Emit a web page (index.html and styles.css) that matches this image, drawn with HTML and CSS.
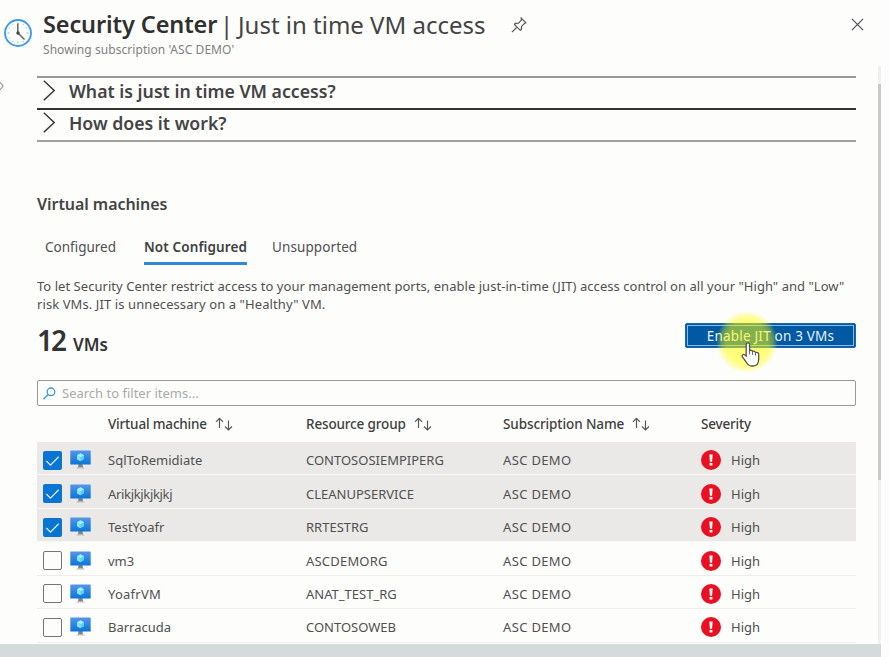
FILE: index.html
```html
<!DOCTYPE html>
<html lang="en">
<head>
<meta charset="utf-8">
<title>Security Center | Just in time VM access</title>
<link rel="stylesheet" href="styles.css">
</head>
<body>
<svg class="defs" aria-hidden="true">
  <defs>
    <linearGradient id="screen" x1="0" y1="0" x2="0" y2="1"><stop offset="0" stop-color="#5596e8"/><stop offset="1" stop-color="#0b74d6"/></linearGradient>
    <symbol id="vm" viewBox="0 0 21 20"><path d="M8.5 14h4l.6 4h-5.2z" fill="#7a848b"/><path d="M6 18.6q1-1.6 3-1.6h3q2 0 3 1.6z" fill="#b9bcbe"/><rect x=".3" y=".5" width="20.4" height="14" rx=".6" fill="url(#screen)"/><path d="M10.5 3.3 14 5.3v4l-3.5 2-3.5-2v-4z" fill="#55d2ef"/><path d="m10.5 3.3 3.5 2-3.5 2-3.5-2z" fill="#a4edf9"/><path d="m7 5.3 3.5 2v4l-3.5-2z" fill="#84e2f6"/></symbol>
    <symbol id="alert" viewBox="0 0 20 20"><circle cx="10" cy="10" r="10" fill="#e81123"/><path d="M8.4 4.5h3.2l-.5 7.2H8.9z" fill="#fff"/><rect x="8.6" y="12.9" width="2.8" height="2.6" fill="#fff"/></symbol>
    <symbol id="sort" viewBox="0 0 18 14"><path d="M4.5 11V1.3M1 4.8l3.5-3.5L8 4.8M13.5 3.5v9.5M10 9.5l3.5 3.5L17 9.5" fill="none" stroke="#555" stroke-width="1.15"/></symbol>
    <symbol id="chevron" viewBox="0 0 12 21"><path d="m.8.8 10.4 9.7L.8 20.2" fill="none" stroke="#333" stroke-width="1.4"/></symbol>
    <symbol id="tick" viewBox="0 0 19 19"><path d="m3.3 10 4.2 4.1 8.2-8.3" fill="none" stroke="#dceefa" stroke-width="1.3"/></symbol>
  </defs>
</svg>
<div class="blade">
  <header class="header">
    <svg class="clock" viewBox="0 0 28 28"><circle cx="14" cy="14" r="13" fill="#fbfcfd" stroke="#3d9be9" stroke-width="1.9"/><path d="M14 3.5v2M14 22.5v2M3.5 14h2M22.5 14h2M8.5 4.8l.6 1.1M19.5 4.8l-.6 1.1M4.8 8.5l1.1.6M23.2 8.5l-1.1.6M4.8 19.5l1.1-.6M8.5 23.2l.6-1.1M19.5 23.2l-.6-1.1" stroke="#aaa" stroke-width=".9"/><path d="M13.8 4.5V14M14 14l6.5 6.5" fill="none" stroke="#666" stroke-width="1.5"/><circle cx="14" cy="14" r="1.7" fill="#444"/></svg>
    <div class="titles">
      <h1><b class="t-name">Security Center</b><span class="t-bar">|</span><span class="t-page">Just in time VM access</span></h1>
      <p class="subtitle"><span>Showing subscription 'ASC DEMO'</span></p>
    </div>
    <svg class="pin" viewBox="0 0 16 16"><path d="m10.2 1.1 4.7 4.7-1.3.5-3.1 3.1-.2 3.2-1.1.7-5.8-5.8.8-1.1 3.3-.2 2.9-3.1zM6.1 10 .9 15.1" fill="none" stroke="#555" stroke-width="1.15"/></svg>
    <svg class="close" viewBox="0 0 14 14"><path d="m1 1 12 12M13 1 1 13" stroke="#4a4a50" stroke-width="1.2"/></svg>
  </header>
  <main class="content">
    <section class="accordion">
      <div class="fold"><svg><use href="#chevron"/></svg><span class="q1">What is just in time VM access?</span></div>
      <div class="fold"><svg><use href="#chevron"/></svg><span class="q2">How does it work?</span></div>
    </section>
    <h2><span>Virtual machines</span></h2>
    <nav class="tabs">
      <a class="tab tab-a">Configured</a><a class="tab tab-b active">Not Configured</a><a class="tab tab-c">Unsupported</a>
    </nav>
    <p class="intro"><span class="l1">To let Security Center restrict access to your management ports, enable just-in-time (JIT) access control on all your "High" and "Low"</span><br><span class="l2">risk VMs. JIT is unnecessary on a "Healthy" VM.</span></p>
    <div class="summary">
      <div class="count"><span class="num">12</span><span class="unit">VMs</span></div>
      <button class="enable"><span>Enable JIT on 3 VMs</span></button>
      <div class="halo"></div>
      <svg class="hand" viewBox="0 0 20 25"><path d="M5.2 14V2.6c0-2.3 3.4-2.3 3.4 0v6.2c1-.9 2.7-.6 3 .7 1.2-.7 2.6-.2 2.9 1 1.5-.6 3.2.2 3.2 2v4.3c0 4-1.7 7.2-5.6 7.2h-1.5c-2.6 0-4-1.5-5.2-3.7L1.3 14.7c-.9-1.8 1.3-3 2.5-1.8z" fill="#fff" stroke="#555" stroke-width="1.3"/><path d="M8.6 8.5v4M11.6 9.5v3.5M14.5 10.5v3" stroke="#666"/></svg>
    </div>
    <div class="search"><svg viewBox="0 0 14 14"><circle cx="8.6" cy="5.2" r="4.1" fill="none" stroke="#3d97dc" stroke-width="1.4"/><path d="m5.5 8.2-5 5" stroke="#3d97dc" stroke-width="1.5"/></svg><span>Search to filter items...</span></div>
    <div class="grid">
      <div class="row head"><span></span><span></span><span class="cell"><b class="h1c">Virtual machine</b><svg><use href="#sort"/></svg></span><span class="cell"><b class="h2c">Resource group</b><svg><use href="#sort"/></svg></span><span class="cell"><b class="h3c">Subscription Name</b><svg><use href="#sort"/></svg></span><span class="cell"><b class="h4c">Severity</b></span></div>
      <div class="row selected"><i class="box"><svg><use href="#tick"/></svg></i><svg class="vm"><use href="#vm"/></svg><span class="cell"><span class="n1">SqlToRemidiate</span></span><span class="cell"><span class="g1">CONTOSOSIEMPIPERG</span></span><span class="cell"><span class="sub">ASC DEMO</span></span><span class="cell sev"><svg><use href="#alert"/></svg><span class="lvl">High</span></span></div>
      <div class="row selected"><i class="box"><svg><use href="#tick"/></svg></i><svg class="vm"><use href="#vm"/></svg><span class="cell"><span class="n2">Arikjkjkjkjkj</span></span><span class="cell"><span class="g2">CLEANUPSERVICE</span></span><span class="cell"><span class="sub">ASC DEMO</span></span><span class="cell sev"><svg><use href="#alert"/></svg><span class="lvl">High</span></span></div>
      <div class="row selected"><i class="box"><svg><use href="#tick"/></svg></i><svg class="vm"><use href="#vm"/></svg><span class="cell"><span class="n3">TestYoafr</span></span><span class="cell"><span class="g3">RRTESTRG</span></span><span class="cell"><span class="sub">ASC DEMO</span></span><span class="cell sev"><svg><use href="#alert"/></svg><span class="lvl">High</span></span></div>
      <div class="row"><i class="box"></i><svg class="vm"><use href="#vm"/></svg><span class="cell"><span class="n4">vm3</span></span><span class="cell"><span class="g4">ASCDEMORG</span></span><span class="cell"><span class="sub">ASC DEMO</span></span><span class="cell sev"><svg><use href="#alert"/></svg><span class="lvl">High</span></span></div>
      <div class="row"><i class="box"></i><svg class="vm"><use href="#vm"/></svg><span class="cell"><span class="n5">YoafrVM</span></span><span class="cell"><span class="g5">ANAT_TEST_RG</span></span><span class="cell"><span class="sub">ASC DEMO</span></span><span class="cell sev"><svg><use href="#alert"/></svg><span class="lvl">High</span></span></div>
      <div class="row"><i class="box"></i><svg class="vm"><use href="#vm"/></svg><span class="cell"><span class="n6">Barracuda</span></span><span class="cell"><span class="g6">CONTOSOWEB</span></span><span class="cell"><span class="sub">ASC DEMO</span></span><span class="cell sev"><svg><use href="#alert"/></svg><span class="lvl">High</span></span></div>
    </div>
  </main>
  <div class="scrollbar"><div class="thumb"></div></div>
  <svg class="expand" viewBox="0 0 4 10"><path d="m0 1 3 4-3 4" fill="none" stroke="#999" stroke-width="1.2"/></svg>
  <footer class="strip"></footer>
</div>
</body>
</html>
```
FILE: styles.css
```css
* { box-sizing: border-box; }
body { margin: 0; background: #fdfdfe; color: #505050; font: 13px/18px "Noto Sans", "Open Sans", sans-serif; overflow: hidden; }
h1, h2, p { margin: 0; font-weight: 400; }
svg { display: block; flex: none; }
.defs { position: absolute; width: 0; height: 0; }
.blade { position: relative; width: 881px; height: 657px; display: flex; flex-direction: column; white-space: nowrap; background: #fdfdfc; }

.header { height: 76px; padding: 7px 17px 0 4px; display: flex; align-items: flex-start; }
.clock { width: 28px; height: 28px; margin: 12px 11px 0 0; }
h1 { height: 35px; display: flex; font-size: 24px; line-height: 35px; color: #444; }
.t-name { font-weight: 600; font-size: 23.5px; color: #303030; width: 174px; letter-spacing: -.12px; }
.t-bar { width: 21px; padding-left: 3px; }
.t-page { width: 249px; letter-spacing: 0; }
.subtitle { font-size: 12px; line-height: 15px; color: #808080; letter-spacing: .06px; }
.pin { width: 16px; height: 16px; margin: 10px 0 0 24px; }
.close { width: 13px; height: 13px; margin: 11px 0 0 auto; }

.content { flex: 1; min-height: 0; width: 819px; margin-left: 37px; overflow: hidden; }
.accordion { border-top: 2px solid #999; border-bottom: 2px solid #a0a0a0; }
.fold { height: 30px; padding: 0 0 4px 6px; display: flex; align-items: center; gap: 14px; font-size: 17.7px; font-weight: 600; color: #444; }
.fold + .fold { border-top: 2px solid #333; height: 32px; }
.fold svg { width: 12px; height: 21px; margin-top: -2px; }
h2 { margin-top: 49px; font-size: 16px; line-height: 26px; font-weight: 600; color: #444; letter-spacing: -.06px; }
.tabs { display: flex; margin-top: 18px; padding-left: 8px; height: 31px; font-size: 13.5px; line-height: 25px; }
.tab { height: 30px; }
.tab-a { width: 72px; margin-right: 27px; }
.tab-b { width: 103px; margin-right: 25px; letter-spacing: .12px; }
.tab-c { letter-spacing: .1px; }
.active { font-weight: 600; color: #404040; border-bottom: 3px solid #2f88d8; }
.intro { margin-top: 12px; line-height: 17.5px; }
.l1 { letter-spacing: .04px; }
.l2 { letter-spacing: .09px; }
.summary { position: relative; display: flex; justify-content: space-between; height: 67px; }
.count { display: flex; align-items: baseline; gap: 9px; color: #333; line-height: 54px; }
.num { font-size: 28px; font-weight: 600; letter-spacing: -2px; margin-right: -1px; }
.unit { font-size: 17px; font-weight: 600; }
.enable { width: 171px; height: 25px; margin-top: 10px; padding: 1px 0 0; border: 1px solid #1667ab; border-radius: 2px; outline: 1px solid #8bbbe0; outline-offset: -3px; background: #0059a3; color: #e8f1f8; font: 13.5px/22px "Noto Sans", sans-serif; letter-spacing: .2px; }
.halo { position: absolute; left: 679px; top: -2px; width: 62px; height: 62px; border-radius: 50%; background: radial-gradient(circle closest-side, rgba(255,255,0,.52) 0 68%, rgba(255,255,0,.35) 84%, rgba(255,255,0,0) 100%); }
.hand { position: absolute; left: 704px; top: 29px; width: 20px; height: 25px; }
.search { height: 26px; border: 1.5px solid #999; border-radius: 2px; display: flex; align-items: center; gap: 6px; padding-left: 5px; color: #aaa; }
.search svg { width: 13px; height: 13px; }

.row { display: grid; grid-template-columns: 33px 38px 198px 197px 198px 155px; height: 33.45px; padding-top: 4px; align-items: center; border-bottom: 1px solid #ededed; }
.row.head { height: 36px; padding: 0; border: 0; color: #404040; }
.row.selected { background: #eae9e7; border-bottom-color: #f8f8f7; }
.cell { display: flex; align-items: center; }
.head b { font-weight: 500; font-size: 13.5px; letter-spacing: -.18px; }
.head .h2c { letter-spacing: -.15px; }
.head .h3c { letter-spacing: -.1px; }
.head svg { width: 18px; height: 14px; margin-left: 8px; }
.box { width: 19px; height: 19px; margin-left: 6px; border: 1.5px solid #757575; border-radius: 2px; }
.selected .box { border: 0; background: #0875d2; }
.box svg { width: 19px; height: 19px; }
.vm { width: 21px; height: 20px; }
.sev { gap: 10px; }
.sev svg { width: 20px; height: 20px; }
.n2 { letter-spacing: -.33px; }
.n5 { letter-spacing: .25px; }
.g4 { letter-spacing: .2px; }
.sub { letter-spacing: .35px; }

.scrollbar { position: absolute; right: 0; top: 66px; width: 3px; height: 578px; padding-top: 18px; background: #f0f0f0; }
.thumb { height: 396px; background: #cacaca; }
.expand { position: absolute; left: 0; top: 81px; width: 4px; height: 10px; }
.strip { height: 13px; background: #d5dbdb; }
```
